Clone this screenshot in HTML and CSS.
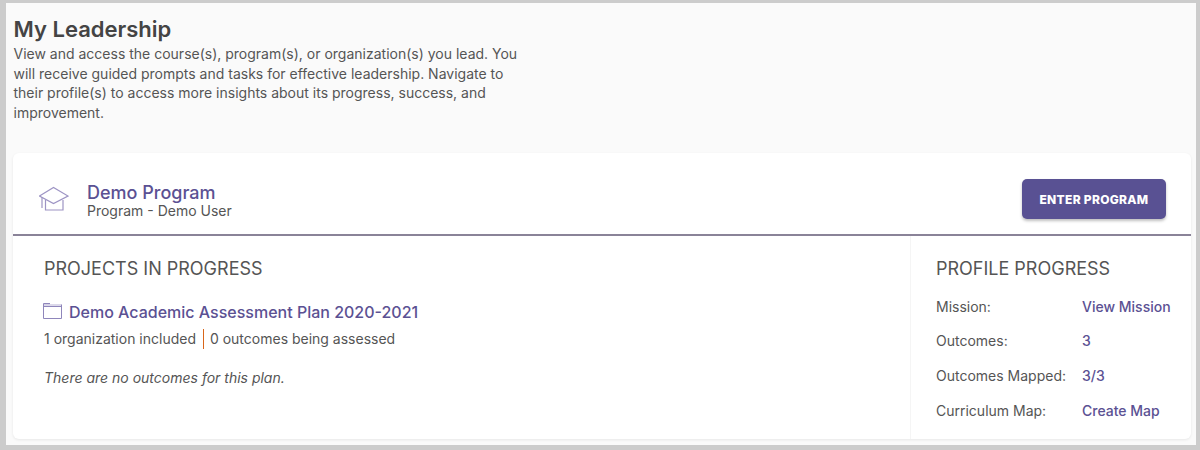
FILE: index.html
```html
<!DOCTYPE html>
<html lang="en">
<head>
    <meta charset="UTF-8">
    <meta name="viewport" content="width=device-width, initial-scale=1.0">
    <title>My Leadership</title>
    <link rel="stylesheet" href="styles.css">
</head>
<body>
    <main class="panel">
        <h1 class="page-title">My Leadership</h1>
        <p class="page-intro">View and access the course(s), program(s), or organization(s) you lead. You will receive guided prompts and tasks for effective leadership. Navigate to their profile(s) to access more insights about its progress, success, and improvement.</p>

        <section class="card">
            <!-- Program header -->
            <div class="card-header">
                <svg class="cap-icon" width="30" height="25" viewBox="0 0 30 25" fill="none" stroke="#9d94c4" stroke-width="1.2">
                    <path d="M.5 10 14.5 1.5 29 10 14.5 17.5Z"/>
                    <path d="M6.5 14V24H24V14"/>
                    <path d="M3 11V22"/>
                </svg>
                <div class="program-info">
                    <a class="program-name" href="#">Demo Program</a>
                    <div class="program-meta">Program - Demo User</div>
                </div>
                <button class="enter-btn">ENTER PROGRAM</button>
            </div>

            <div class="card-body">
                <!-- Projects -->
                <div class="projects">
                    <h2 class="section-title">PROJECTS IN PROGRESS</h2>
                    <div class="project-title">
                        <svg class="folder-icon" width="19" height="16" viewBox="0 0 19 16" fill="none" stroke="#8f86bb" stroke-width="1">
                            <path d="M.5 1H18.5V3.5H.5Z" fill="#dcd9ea" stroke="none"/>
                            <path d="M.5 .5V15.5H18.5V1.5"/>
                            <path d="M.5 .5H7" stroke-width="1.2"/>
                            <path d="M.5 3.5H18.5"/>
                        </svg>
                        <a href="#">Demo Academic Assessment Plan 2020-2021</a>
                    </div>
                    <p class="project-meta">1 organization included <span class="divider">0 outcomes being assessed</span></p>
                    <p class="no-outcomes">There are no outcomes for this plan.</p>
                </div>

                <!-- Profile progress -->
                <aside class="profile">
                    <h2 class="section-title">PROFILE PROGRESS</h2>
                    <dl class="profile-list">
                        <dt>Mission:</dt>
                        <dd><a href="#">View Mission</a></dd>
                        <dt>Outcomes:</dt>
                        <dd><a href="#">3</a></dd>
                        <dt>Outcomes Mapped:</dt>
                        <dd><a href="#">3/3</a></dd>
                        <dt>Curriculum Map:</dt>
                        <dd><a href="#">Create Map</a></dd>
                    </dl>
                </aside>
            </div>
        </section>
    </main>
</body>
</html>
```

FILE: styles.css
```css
html, body {
    margin: 0;
    height: 100%;
}
body {
    font-family: Inter, "Liberation Sans", sans-serif;
    background-color: #cccccc;
    padding: 3px 4px 5px 6px;
    box-sizing: border-box;
    overflow: hidden;
    color: #555555;
}
a {
    color: #5b5193;
    text-decoration: none;
}
.panel {
    height: 100%;
    background-color: #fafafa;
    padding: 13px 5px 5px 7px;
    box-sizing: border-box;
}
.page-title {
    margin: 0 0 0 0.5px;
    font-size: 22px;
    line-height: 27px;
    font-weight: 600;
    color: #444444;
}
.page-intro {
    margin: 1px 0 0 0.5px;
    width: 510px;
    font-size: 14px;
    line-height: 19.5px;
}
.card {
    margin-top: 31px;
    background-color: #fff;
    border-radius: 6px;
    box-shadow: 0 1px 3px rgba(0, 0, 0, 0.08);
    height: 286px;
}
.card-header {
    display: flex;
    align-items: center;
    height: 83px;
    box-sizing: border-box;
    padding: 12px 25px 0 26px;
    border-bottom: 2px solid #8a8398;
}
.cap-icon {
    margin-right: 18px;
    margin-top: -3px;
}
.program-info {
    flex: 1;
    margin-top: 3px;
}
.program-name {
    display: block;
    font-size: 18px;
    line-height: 19px;
    font-weight: 500;
}
.program-meta {
    font-size: 14px;
    line-height: 17px;
}
.enter-btn {
    width: 144px;
    height: 40px;
    margin-top: -1px;
    font-family: inherit;
    font-size: 12px;
    font-weight: 800;
    letter-spacing: 0.3px;
    color: #fff;
    background-color: #595193;
    border: none;
    border-radius: 5px;
    box-shadow: 0 2px 3px rgba(0, 0, 0, 0.25);
}
.card-body {
    display: flex;
    height: 203px;
}
.projects {
    flex: 1;
    padding: 23px 0 0 31px;
}
.profile {
    width: 281px;
    box-sizing: border-box;
    padding: 23px 0 0 25px;
    border-left: 1px solid #f5f5f5;
}
.section-title {
    margin: 0;
    font-size: 18px;
    line-height: 20px;
    font-weight: 400;
    color: #555555;
}
.project-title {
    display: flex;
    align-items: center;
    gap: 7px;
    margin-top: 22px;
    font-size: 16px;
    line-height: 22px;
    font-weight: 500;
}
.folder-icon {
    margin: 0 0 3px -1px;
}
.project-meta {
    margin: 6px 0 0;
    font-size: 14px;
    line-height: 20px;
}
.divider {
    display: inline-block;
    border-left: 1px solid #d9661a;
    padding-left: 6px;
    margin-left: 3px;
}
.no-outcomes {
    margin: 19px 0 0;
    font-size: 14px;
    line-height: 20px;
    font-style: italic;
}
.profile-list {
    display: grid;
    grid-template-columns: 146px 1fr;
    grid-auto-rows: 34.67px;
    align-items: center;
    margin: 10px 0 0;
    font-size: 14px;
}
.profile-list dd {
    margin: 0;
    font-weight: 500;
}
```
